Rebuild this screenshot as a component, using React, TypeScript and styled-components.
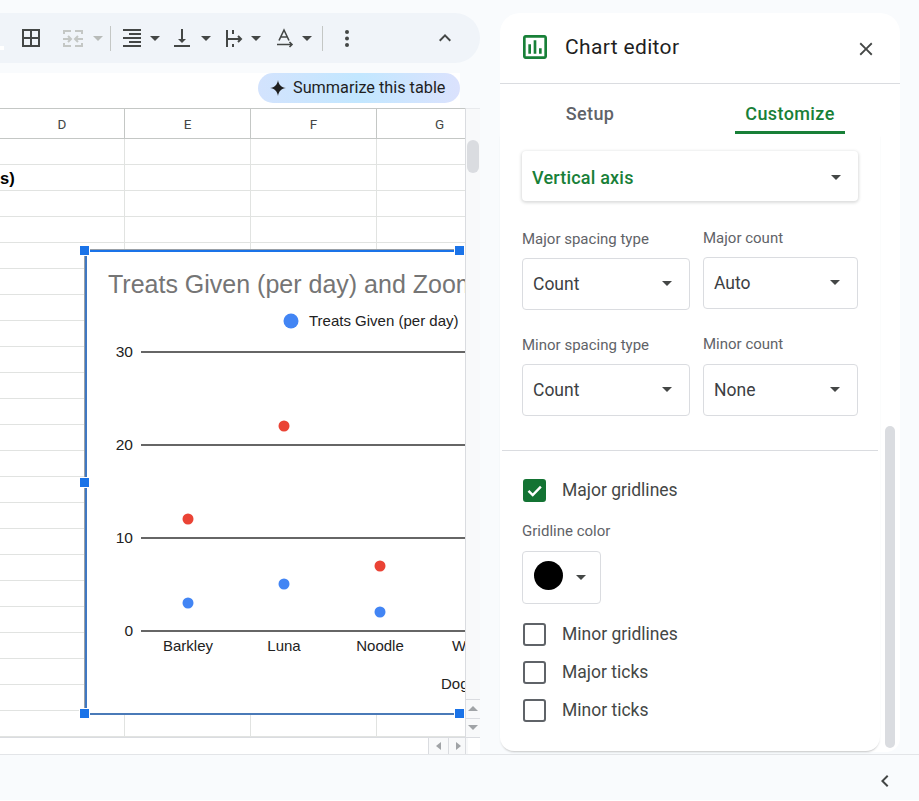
import React from 'react';
import styled, { createGlobalStyle } from 'styled-components';

const GlobalStyle = createGlobalStyle`
  html, body {
    margin: 0;
    height: 100%;
    overflow: hidden;
    background: #fff;
    font-family: Roboto, "Liberation Sans", sans-serif;
  }
  * { box-sizing: border-box; }
`;

const Page = styled.div`
  height: 800px;
  display: flex;
  flex-direction: column;
  background: #f9fbfd;
`;

const Workspace = styled.div`
  display: flex;
  height: 754px;
`;

const SheetColumn = styled.div`
  width: 480px;
  padding-top: 13px;
  display: flex;
  flex-direction: column;
`;

const Toolbar = styled.div`
  position: relative;
  height: 50px;
  display: flex;
  align-items: center;
  padding-left: 19px;
  background: #f0f4f9;
  border-radius: 0 25px 25px 0;
`;

const FillSwatch = styled.span`
  position: absolute;
  left: 0;
  top: 33px;
  width: 4px;
  height: 4px;
  background: #fff;
`;

const ToolIcon = styled.svg.attrs({ viewBox: '0 0 24 24' })<{ $ml?: number; $muted?: boolean }>`
  width: 24px;
  height: 24px;
  flex: none;
  margin-left: ${({ $ml = 0 }) => $ml}px;
  color: ${({ $muted }) => ($muted ? '#c4c7c5' : '#444746')};
`;

const Caret = styled.span<{ $ml?: number; $size?: number; $muted?: boolean }>`
  flex: none;
  width: 0;
  height: 0;
  margin-left: ${({ $ml = 0 }) => $ml}px;
  border-left: ${({ $size = 5 }) => $size}px solid transparent;
  border-right: ${({ $size = 5 }) => $size}px solid transparent;
  border-top: ${({ $size = 5 }) => $size}px solid ${({ $muted }) => ($muted ? '#b8bbb9' : '#444746')};
`;

const ToolSeparator = styled.span<{ $ml: number }>`
  flex: none;
  width: 1px;
  height: 25px;
  margin-left: ${({ $ml }) => $ml}px;
  background: #c4c7c5;
`;

const CollapseIcon = styled(ToolIcon)`
  margin-left: auto;
  margin-right: 23px;
`;

const SummaryRow = styled.div`
  margin-top: 10px;
  width: 460px;
  height: 35px;
  background: #fff;
  display: flex;
  justify-content: flex-end;
  align-items: flex-start;
`;

const SummaryChip = styled.div`
  width: 202px;
  height: 30px;
  border-radius: 15px;
  display: flex;
  align-items: center;
  gap: 7px;
  padding: 0 0 1px 12px;
  font-size: 16.25px;
  color: #1f1f1f;
  background: linear-gradient(90deg, #d3e3fd 0%, #c2e7ff 50%, #dbe2fd 100%);
  white-space: nowrap;
`;

const SheetBody = styled.div`
  position: relative;
  display: flex;
  height: 629px;
`;

const Grid = styled.div`
  width: 465px;
  height: 629px;
  overflow: hidden;
  display: grid;
  grid-template-columns: 125px 126px 126px 126px;
  grid-auto-rows: 26px;
  grid-template-rows: 31px;
  background: #fff;
  align-content: start;
`;

const HeaderCell = styled.div`
  display: flex;
  align-items: center;
  justify-content: center;
  border-top: 1px solid #c4c7c5;
  border-right: 1px solid #c4c7c5;
  border-bottom: 1px solid #c4c7c5;
  font-size: 13.5px;
  color: #444746;
`;

const Cell = styled.div`
  display: flex;
  align-items: center;
  overflow: hidden;
  padding-top: 1px;
  border-right: 1px solid #e1e3e1;
  border-bottom: 1px solid #e1e3e1;
  font: 700 16.5px "Liberation Sans", sans-serif;
  color: #000;
`;

const VScroll = styled.div`
  width: 15px;
  height: 629px;
  display: flex;
  flex-direction: column;
  background: #f8f9fa;
  border-left: 1px solid #dadce0;
`;

const VScrollHead = styled.div`
  height: 32px;
  flex: none;
  border-top: 1px solid #e8eaed;
`;

const VThumb = styled.div`
  width: 12px;
  height: 33px;
  margin-left: 1px;
  border-radius: 6px;
  background: #dadce0;
`;

const VButtons = styled.div`
  margin-top: auto;
  height: 38px;
  display: grid;
  grid-template-rows: 1fr 1fr;
  border-top: 1px solid #dadce0;
`;

const ScrollButton = styled.div<{ $line?: boolean }>`
  display: flex;
  align-items: center;
  justify-content: center;
  border-bottom: 1px solid ${({ $line }) => ($line ? '#dadce0' : 'transparent')};
`;

const ArrowUp = styled.span`
  width: 0;
  height: 0;
  border-left: 5px solid transparent;
  border-right: 5px solid transparent;
  border-bottom: 5px solid #a0a3a6;
`;

const ArrowDown = styled(ArrowUp)`
  border-bottom: 0;
  border-top: 5px solid #a0a3a6;
`;

const HScroll = styled.div`
  height: 17px;
  display: flex;
  justify-content: flex-end;
  background: #fff;
  border-top: 1px solid #dadce0;
  padding-right: 12px;
`;

const HButton = styled.div<{ $width: number; $lead?: number }>`
  width: ${({ $width }) => $width}px;
  padding-left: ${({ $lead = 0 }) => $lead}px;
  display: flex;
  align-items: center;
  justify-content: center;
  background: #f8f9fa;
  border-left: 1px solid #dadce0;
`;

const ArrowLeft = styled.span`
  width: 0;
  height: 0;
  border-top: 4px solid transparent;
  border-bottom: 4px solid transparent;
  border-right: 5px solid #a0a3a6;
`;

const ArrowRight = styled(ArrowLeft)`
  border-right: 0;
  border-left: 5px solid #a0a3a6;
`;

const ChartFrame = styled.div`
  position: absolute;
  left: 85px;
  top: 142px;
  width: 380px;
  height: 465px;
  background: #fff;
  border-style: solid;
  border-width: 2px 0 2px 2px;
  border-color: #1a73e8 transparent #4a7ab8 #3f78c2;
  box-shadow: -1px -1px 0 #9aa0a6;
`;

const ChartSvg = styled.svg`
  display: block;
  font-family: "Liberation Sans", Arial, sans-serif;
`;

const Handle = styled.span<{ $left: number; $top: number }>`
  position: absolute;
  left: ${({ $left }) => $left}px;
  top: ${({ $top }) => $top}px;
  width: 9px;
  height: 9px;
  background: #1a73e8;
  box-shadow: 0 0 0 1px #fff;
`;

const Panel = styled.aside`
  position: relative;
  width: 400px;
  height: 739px;
  margin: 13px 0 0 20px;
  background: #fff;
  border-radius: 20px 20px 14px 14px;
`;

const PanelHeader = styled.header`
  height: 71px;
  display: flex;
  align-items: center;
  padding: 0 23px 2px 19px;
  border-bottom: 1px solid #dadce0;
`;

const PanelTitle = styled.h1`
  margin: 0 0 0 14px;
  font-size: 21px;
  font-weight: 400;
  letter-spacing: 0.35px;
  color: #1f1f1f;
`;

const CloseIcon = styled.svg.attrs({ viewBox: '0 0 24 24' })`
  width: 22px;
  height: 22px;
  margin: 3px 0 0 auto;
  color: #444746;
`;

const Tabs = styled.nav`
  height: 50px;
  display: flex;
  gap: 90px;
  padding-left: 35px;
`;

const Tab = styled.div<{ $active?: boolean }>`
  width: 110px;
  height: 50px;
  padding-top: 19px;
  text-align: center;
  font-size: 18px;
  line-height: 22px;
  font-weight: 500;
  letter-spacing: 0.4px;
  color: ${({ $active }) => ($active ? '#188038' : '#5f6368')};
  border-bottom: 3px solid ${({ $active }) => ($active ? '#188038' : 'transparent')};
`;

const PanelBody = styled.div`
  width: 380px;
  height: 617px;
  padding-top: 17px;
  border-radius: 0 0 14px 14px;
  box-shadow: 0 2px 2px -1px rgba(60, 64, 67, 0.3);
`;

const SectionSelect = styled.div`
  width: 336px;
  height: 50px;
  margin-left: 22px;
  padding: 2px 17px 0 10px;
  display: flex;
  align-items: center;
  justify-content: space-between;
  border-radius: 4px;
  box-shadow: 0 1px 3px 1px rgba(60, 64, 67, 0.18);
  font-size: 18px;
  font-weight: 500;
  letter-spacing: 0.2px;
  color: #188038;
`;

const FieldRow = styled.div<{ $top: number }>`
  display: grid;
  grid-template-columns: 168px 155px;
  column-gap: 13px;
  margin: ${({ $top }) => $top}px 0 0 22px;
`;

const Field = styled.div<{ $lead?: number; $gap?: number }>`
  padding-top: ${({ $lead = 0 }) => $lead}px;
  display: flex;
  flex-direction: column;
  gap: ${({ $gap = 11 }) => $gap}px;
`;

const Label = styled.label`
  display: block;
  font-size: 15px;
  line-height: 16px;
  color: #5f6368;
`;

const Select = styled.div`
  height: 52px;
  padding: 0 17px 1px 10px;
  display: flex;
  align-items: center;
  justify-content: space-between;
  border: 1px solid #dadce0;
  border-radius: 4px;
  font-size: 17.5px;
  color: #3c4043;
`;

const Divider = styled.hr`
  margin: 34px 0 0 2px;
  width: 376px;
  border: 0;
  border-top: 1px solid #dadce0;
`;

const CheckRow = styled.div<{ $top: number }>`
  display: flex;
  align-items: center;
  gap: 16px;
  margin: ${({ $top }) => $top}px 0 0 23px;
  font-size: 17.5px;
  line-height: 23px;
  color: #444746;
`;

const Checkbox = styled.span<{ $checked?: boolean }>`
  width: 23px;
  height: 23px;
  flex: none;
  display: flex;
  align-items: center;
  justify-content: center;
  border-radius: 3px;
  border: 2px solid ${({ $checked }) => ($checked ? '#137333' : '#5f6368')};
  background: ${({ $checked }) => ($checked ? '#137333' : 'transparent')};
`;

const GridlineLabel = styled(Label)`
  margin: 21px 0 0 22px;
`;

const ColorButton = styled.div`
  width: 79px;
  height: 53px;
  margin: 12px 0 0 22px;
  padding-left: 11px;
  display: flex;
  align-items: center;
  gap: 13px;
  border: 1px solid #dadce0;
  border-radius: 4px;
`;

const ColorDot = styled.span`
  width: 29px;
  height: 29px;
  margin-bottom: 4px;
  border-radius: 50%;
  background: #000;
`;

const PanelScrollThumb = styled.div`
  position: absolute;
  right: 5px;
  top: 413px;
  width: 10px;
  height: 322px;
  border-radius: 5px;
  background: #dadce0;
`;

const Footer = styled.footer`
  height: 46px;
  display: flex;
  justify-content: flex-end;
  align-items: center;
  padding: 7px 22px 0 0;
  border-top: 1px solid #e3e5e8;
`;

const columns = ['D', 'E', 'F', 'G'];
const rowCount = 23;

const dots = [
  { x: 188, y: 519, fill: '#ea4335' },
  { x: 284, y: 426, fill: '#ea4335' },
  { x: 380, y: 566, fill: '#ea4335' },
  { x: 188, y: 603, fill: '#4285f4' },
  { x: 284, y: 584, fill: '#4285f4' },
  { x: 380, y: 612, fill: '#4285f4' },
];

const yTicks = [
  { label: '30', y: 352 },
  { label: '20', y: 445 },
  { label: '10', y: 538 },
  { label: '0', y: 631 },
];

const xLabels = [
  { label: 'Barkley', x: 188 },
  { label: 'Luna', x: 284 },
  { label: 'Noodle', x: 380 },
];

const handles = [
  { left: 80, top: 138 },
  { left: 455, top: 138 },
  { left: 80, top: 370 },
  { left: 80, top: 601 },
  { left: 455, top: 601 },
];

const Chart = () => (
  <ChartSvg width={378} height={461} viewBox="87 252 378 461">
    <text x={108} y={293} fontSize={25} fill="#757575">
      Treats Given (per day) and Zoom
    </text>
    <circle cx={291} cy={321} r={7.5} fill="#4285f4" />
    <text x={309} y={326} fontSize={15} fill="#222">
      Treats Given (per day)
    </text>
    {yTicks.map(t => (
      <g key={t.label}>
        <line x1={141} x2={465} y1={t.y} y2={t.y} stroke="#666" strokeWidth={2} />
        <text x={133} y={t.y + 5} textAnchor="end" fontSize={15.5} fill="#222">
          {t.label}
        </text>
      </g>
    ))}
    {dots.map(d => (
      <circle key={`${d.x}-${d.y}`} cx={d.x} cy={d.y} r={5.5} fill={d.fill} />
    ))}
    {xLabels.map(l => (
      <text key={l.label} x={l.x} y={651} textAnchor="middle" fontSize={15} fill="#222">
        {l.label}
      </text>
    ))}
    <text x={452} y={651} fontSize={15} fill="#222">
      W
    </text>
    <text x={441} y={689} fontSize={15} fill="#222">
      Dog
    </text>
  </ChartSvg>
);

export default function App() {
  return (
    <Page>
      <GlobalStyle />
      <Workspace>
        <SheetColumn>
          <Toolbar>
            <FillSwatch />
            <ToolIcon>
              <path
                fill="currentColor"
                d="M3 3v18h18V3H3zm8 16H5v-6h6v6zm0-8H5V5h6v6zm8 8h-6v-6h6v6zm0-8h-6V5h6v6z"
              />
            </ToolIcon>
            <ToolIcon $ml={17} $muted>
              <path
                fill="none"
                stroke="currentColor"
                strokeWidth={2}
                d="M11 5H4v3M4 17v3h7M15 5h7v3M22 17v3h-7M3 13h8M8 10l3 3-3 3M23 13h-8M18 10l-3 3 3 3"
              />
            </ToolIcon>
            <Caret $ml={9} $muted />
            <ToolSeparator $ml={7} />
            <ToolIcon $ml={9}>
              <path
                fill="currentColor"
                d="M3 21h18v-2H3v2zm6-4h12v-2H9v2zm-6-4h18v-2H3v2zm6-4h12V7H9v2zM3 3v2h18V3H3z"
              />
            </ToolIcon>
            <Caret $ml={6} />
            <ToolIcon $ml={10}>
              <path fill="currentColor" d="M16 13h-3V3h-2v10H8l4 4 4-4zM4 19v2h16v-2H4z" />
            </ToolIcon>
            <Caret $ml={7} />
            <ToolIcon $ml={11}>
              <path
                fill="none"
                stroke="currentColor"
                strokeWidth={2}
                d="M5 4v17M11 4v4M11 18v3M6 13h12.5M16 10l3 3-3 3"
              />
            </ToolIcon>
            <Caret $ml={5} />
            <ToolIcon $ml={11}>
              <path
                fill="none"
                stroke="currentColor"
                strokeWidth={1.6}
                d="M7 14.5L12 4l5 10.5M8.5 11h7M5 18.5h15M17.5 16l2.5 2.5-2.5 2.5"
              />
            </ToolIcon>
            <Caret $ml={6} />
            <ToolSeparator $ml={10} />
            <ToolIcon $ml={12}>
              <g fill="currentColor">
                <circle cx={12} cy={6} r={2} />
                <circle cx={12} cy={12.5} r={2} />
                <circle cx={12} cy={19} r={2} />
              </g>
            </ToolIcon>
            <CollapseIcon>
              <path fill="currentColor" d="M12 8l-6 6 1.41 1.41L12 10.83l4.59 4.58L18 14z" />
            </CollapseIcon>
          </Toolbar>
          <SummaryRow>
            <SummaryChip>
              <svg width={16} height={16} viewBox="0 0 16 16">
                <path
                  fill="#1f1f1f"
                  d="M8 0C8.6 4.6 11.4 7.4 16 8 11.4 8.6 8.6 11.4 8 16 7.4 11.4 4.6 8.6 0 8 4.6 7.4 7.4 4.6 8 0Z"
                />
              </svg>
              Summarize this table
            </SummaryChip>
          </SummaryRow>
          <SheetBody>
            <Grid>
              {columns.map(c => (
                <HeaderCell key={c}>{c}</HeaderCell>
              ))}
              {Array.from({ length: rowCount * columns.length }, (_, i) => (
                <Cell key={i}>{i === 4 ? 's)' : ''}</Cell>
              ))}
            </Grid>
            <VScroll>
              <VScrollHead />
              <VThumb />
              <VButtons>
                <ScrollButton $line>
                  <ArrowUp />
                </ScrollButton>
                <ScrollButton>
                  <ArrowDown />
                </ScrollButton>
              </VButtons>
            </VScroll>
            <ChartFrame>
              <Chart />
            </ChartFrame>
            {handles.map(h => (
              <Handle key={`${h.left}-${h.top}`} $left={h.left} $top={h.top} />
            ))}
          </SheetBody>
          <HScroll>
            <HButton $width={20}>
              <ArrowLeft />
            </HButton>
            <HButton $width={17} $lead={3}>
              <ArrowRight />
            </HButton>
            <HButton $width={3} />
          </HScroll>
        </SheetColumn>
        <Panel>
          <PanelHeader>
            <svg width={32} height={32} viewBox="0 0 24 24">
              <path
                fill="#188038"
                d="M19 3H5c-1.1 0-2 .9-2 2v14c0 1.1.9 2 2 2h14c1.1 0 2-.9 2-2V5c0-1.1-.9-2-2-2zm0 16H5V5h14v14zM7 10h2v7H7zm4-3h2v10h-2zm4 6h2v4h-2z"
              />
            </svg>
            <PanelTitle>Chart editor</PanelTitle>
            <CloseIcon>
              <path
                fill="currentColor"
                d="M19 6.41L17.59 5 12 10.59 6.41 5 5 6.41 10.59 12 5 17.59 6.41 19 12 13.41 17.59 19 19 17.59 13.41 12z"
              />
            </CloseIcon>
          </PanelHeader>
          <Tabs>
            <Tab>Setup</Tab>
            <Tab $active>Customize</Tab>
          </Tabs>
          <PanelBody>
            <SectionSelect>
              Vertical axis
              <Caret $size={5.5} />
            </SectionSelect>
            <FieldRow $top={29}>
              <Field $lead={1}>
                <Label>Major spacing type</Label>
                <Select>
                  Count
                  <Caret $size={5.5} />
                </Select>
              </Field>
              <Field>
                <Label>Major count</Label>
                <Select>
                  Auto
                  <Caret $size={5.5} />
                </Select>
              </Field>
            </FieldRow>
            <FieldRow $top={26}>
              <Field $lead={1}>
                <Label>Minor spacing type</Label>
                <Select>
                  Count
                  <Caret $size={5.5} />
                </Select>
              </Field>
              <Field $gap={12}>
                <Label>Minor count</Label>
                <Select>
                  None
                  <Caret $size={5.5} />
                </Select>
              </Field>
            </FieldRow>
            <Divider />
            <CheckRow $top={28}>
              <Checkbox $checked>
                <svg width={17} height={17} viewBox="0 0 24 24">
                  <path fill="none" stroke="#fff" strokeWidth={3.4} d="M3.5 12.5l6 6L21 6.5" />
                </svg>
              </Checkbox>
              Major gridlines
            </CheckRow>
            <GridlineLabel>Gridline color</GridlineLabel>
            <ColorButton>
              <ColorDot />
              <Caret />
            </ColorButton>
            <CheckRow $top={19}>
              <Checkbox />
              Minor gridlines
            </CheckRow>
            <CheckRow $top={15}>
              <Checkbox />
              Major ticks
            </CheckRow>
            <CheckRow $top={15}>
              <Checkbox />
              Minor ticks
            </CheckRow>
          </PanelBody>
          <PanelScrollThumb />
        </Panel>
      </Workspace>
      <Footer>
        <ToolIcon>
          <path fill="currentColor" d="M15.41 7.41L14 6l-6 6 6 6 1.41-1.41L10.83 12z" />
        </ToolIcon>
      </Footer>
    </Page>
  );
}
